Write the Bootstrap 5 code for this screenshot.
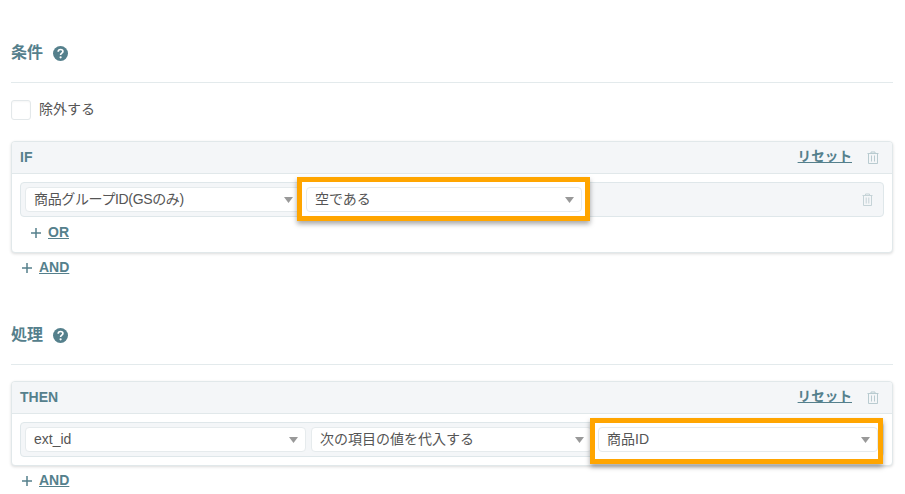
<!DOCTYPE html>
<html lang="ja">
<head>
<meta charset="utf-8">
<title>条件</title>
<link rel="stylesheet" href="https://cdn.jsdelivr.net/npm/bootstrap@5.3.0/dist/css/bootstrap.min.css">
<style>
html,body{height:494px;overflow:hidden}
body{font-family:"Liberation Sans","Noto Sans CJK JP",sans-serif;font-size:14px;color:#444;background:#fff}
.pg{padding:0 12px 0 11px}
.sec-head{height:39px;color:#55808c;font-size:16px;font-weight:700;line-height:20px;gap:10px;margin:0}
.sec-head-first{margin-top:43px}
.sec-head-next{margin-top:47px}
.help-ic{margin-top:3px}
.rule-line{margin:0;border:0;border-top:1px solid #e3eaec;opacity:1}
.excl{margin-top:16px;height:21px;gap:8px;font-size:14px;color:#555}
.excl .form-check-input{width:20px;height:20px;margin:0;border:1px solid #e3e8ea;border-radius:3px;box-shadow:inset 0 1px 2px rgba(0,0,0,.04)}
.rule-card{border:1px solid #e1e8ea;border-radius:4px;box-shadow:0 1px 3px rgba(0,0,0,.14);--bs-card-bg:#fff}
.rule-card-if{margin-top:21px;height:112px}
.rule-card-then{margin-top:16px;height:85px}
.rule-head{height:32px;padding:0 13px 0 8px;background:#f4f6f8;border-bottom:1px solid #e1e8ea;border-radius:3px 3px 0 0;color:#55808c;font-weight:700;font-size:14px}
.reset-link{color:#55808c;font-size:13.500px;font-weight:700;letter-spacing:.1px;text-decoration:underline;margin-right:15px}
.rule-body{padding:8px 8px 0}
.cond-row{height:35px;padding:0 4px;gap:5px;background:#f4f6f8;border:1px solid #dfe7ea;border-radius:4px}
.pick-wrap{position:relative;flex:0 0 auto}
.w-if{width:276px}
.w-then{width:281px}
.w-last{width:280px;margin-left:1px}
.pick{position:relative;z-index:1;height:25px;padding:0 24px 0 8px;font-size:14px;line-height:23px;color:#555;border:1px solid #e6ebed;border-radius:4px;box-shadow:none;background-color:#fff;background-image:url("data:image/svg+xml,%3Csvg xmlns='http://www.w3.org/2000/svg' width='9' height='6'%3E%3Cpath d='M0 0h9L4.500 6z' fill='%23999'/%3E%3C/svg%3E");background-position:right 7px center;background-size:9px 6px}
.pick-tight{letter-spacing:-.35px}
.hl::before{content:"";position:absolute;top:-10px;right:-8px;bottom:-9px;left:-9px;background:#fff;border:5px solid #ffa500;box-shadow:0 3px 5px rgba(0,0,0,.35)}
.hl-last::before{top:-9px;right:-5px;bottom:-12px;left:-8px}
.hl{z-index:2}
.trash-end{margin-left:auto;margin-right:6px}
.add-line{gap:7px;color:#55808c;font-weight:700;font-size:14px}
.add-line a{color:#55808c}
.add-or{margin:5px 0 0 11px}
.add-and{margin:4px 0 0 11px}
.add-and-2{margin:4px 0 0 11px}
</style>
</head>
<body>
<div class="pg">
  <h2 class="sec-head sec-head-first d-flex align-items-start">条件
    <svg width="15" height="15" viewBox="0 0 15 15" class="help-ic"><circle cx="7.500" cy="7.500" r="7.500" fill="#55808c"/><path d="M5.200 5.800c0-1.500 1-2.300 2.400-2.300s2.300.8 2.300 2c0 1.700-2.300 1.700-2.300 3.500" fill="none" stroke="#fff" stroke-width="1.700"/><circle cx="7.600" cy="11.300" r="1.100" fill="#fff"/></svg>
  </h2>
  <hr class="rule-line">
  <label class="excl d-flex align-items-center"><input type="checkbox" class="form-check-input">除外する</label>

  <div class="card rule-card rule-card-if">
    <div class="rule-head d-flex align-items-center justify-content-between">
      <span>IF</span>
      <span class="d-flex align-items-center"><a href="#" class="reset-link">リセット</a>
        <svg width="12" height="13" viewBox="0 0 12 13" fill="none" stroke="#b9cbd0"><path d="M.5 2.500h11M4 2.500V1h4v1.500M1.500 2.500v10h9v-10M4.500 4.500v6M7.500 4.500v6"/></svg></span>
    </div>
    <div class="rule-body">
      <div class="cond-row d-flex align-items-center">
        <div class="pick-wrap w-if"><select class="form-select pick pick-tight"><option>商品グループID(GSのみ)</option></select></div>
        <div class="pick-wrap w-if hl"><select class="form-select pick"><option>空である</option></select></div>
        <svg class="trash-end" width="11" height="13" viewBox="0 0 11 13" fill="none" stroke="#c5d3d7"><path d="M.5 2.500h10M3.500 2.500V1h4v1.500M1.500 2.500v10h8v-10M4.200 4.500v6M6.800 4.500v6"/></svg>
      </div>
      <div class="add-line add-or d-flex align-items-center"><svg width="10" height="10" viewBox="0 0 10 10" stroke="#55808c" stroke-width="1.500"><path d="M5 0v10M0 5h10"/></svg><a href="#">OR</a></div>
    </div>
  </div>
  <div class="add-line add-and d-flex align-items-center"><svg width="10" height="10" viewBox="0 0 10 10" stroke="#55808c" stroke-width="1.500"><path d="M5 0v10M0 5h10"/></svg><a href="#">AND</a></div>

  <h2 class="sec-head sec-head-next d-flex align-items-start">処理
    <svg width="15" height="15" viewBox="0 0 15 15" class="help-ic"><circle cx="7.500" cy="7.500" r="7.500" fill="#55808c"/><path d="M5.200 5.800c0-1.500 1-2.300 2.400-2.300s2.300.8 2.300 2c0 1.700-2.300 1.700-2.300 3.500" fill="none" stroke="#fff" stroke-width="1.700"/><circle cx="7.600" cy="11.300" r="1.100" fill="#fff"/></svg>
  </h2>
  <hr class="rule-line">

  <div class="card rule-card rule-card-then">
    <div class="rule-head d-flex align-items-center justify-content-between">
      <span>THEN</span>
      <span class="d-flex align-items-center"><a href="#" class="reset-link">リセット</a>
        <svg width="12" height="13" viewBox="0 0 12 13" fill="none" stroke="#b9cbd0"><path d="M.5 2.500h11M4 2.500V1h4v1.500M1.500 2.500v10h9v-10M4.500 4.500v6M7.500 4.500v6"/></svg></span>
    </div>
    <div class="rule-body">
      <div class="cond-row d-flex align-items-center">
        <div class="pick-wrap w-then"><select class="form-select pick"><option>ext_id</option></select></div>
        <div class="pick-wrap w-then"><select class="form-select pick"><option>次の項目の値を代入する</option></select></div>
        <div class="pick-wrap w-last hl hl-last"><select class="form-select pick"><option>商品ID</option></select></div>
      </div>
    </div>
  </div>
  <div class="add-line add-and-2 d-flex align-items-center"><svg width="10" height="10" viewBox="0 0 10 10" stroke="#55808c" stroke-width="1.500"><path d="M5 0v10M0 5h10"/></svg><a href="#">AND</a></div>
</div>
<script src="https://cdn.jsdelivr.net/npm/bootstrap@5.3.0/dist/js/bootstrap.bundle.min.js"></script>
</body>
</html>
